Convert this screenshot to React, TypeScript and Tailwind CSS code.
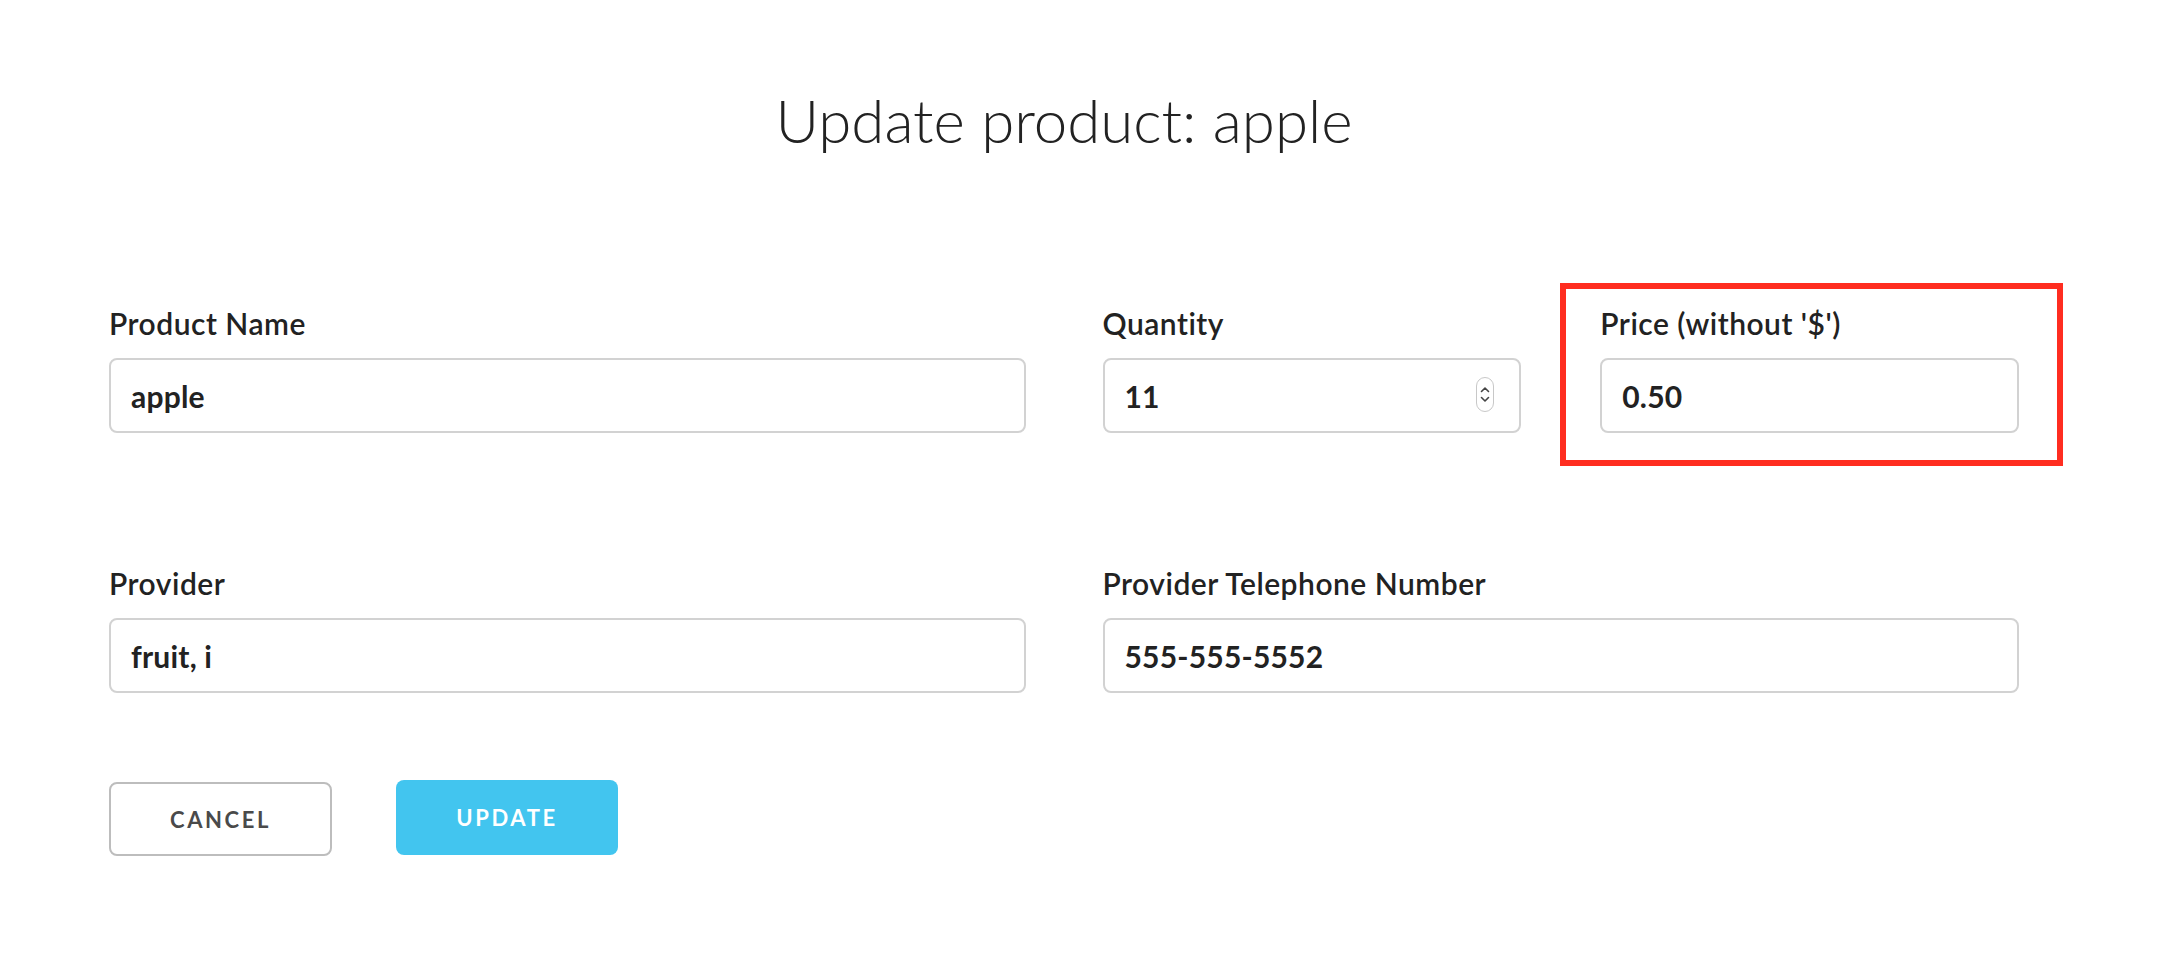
import React from "react";

const font = { fontFamily: "Lato, 'Open Sans', sans-serif" };

function Field({ label, value, className = "", children }: { label: string; value: string; className?: string; children?: React.ReactNode }) {
  return (
    <div className={`relative ${className}`}>
      <label className="block text-[30px] font-semibold leading-[1.2] tracking-[0.5px] text-[#222]">{label}</label>
      <div className="relative mt-[17px]">
        <input
          type="text"
          defaultValue={value}
          readOnly
          className="block h-[75px] w-full rounded-[8px] border-2 border-[#d2d2d2] bg-white px-[20px] text-[30px] font-bold tracking-[0.2px] text-[#222] outline-none"
        />
        {children}
      </div>
    </div>
  );
}

function Spinner() {
  return (
    <div className="absolute right-[27px] top-[19px] flex h-[35px] w-[18px] flex-col items-center justify-center gap-[3px] rounded-full border border-[#c8c8c8] bg-white">
      <svg width="10" height="7" viewBox="0 0 10 7" fill="none" stroke="#444" strokeWidth="1.6" strokeLinecap="round" strokeLinejoin="round">
        <path d="M1.5 5.5 5 2l3.5 3.5" />
      </svg>
      <svg width="10" height="7" viewBox="0 0 10 7" fill="none" stroke="#444" strokeWidth="1.6" strokeLinecap="round" strokeLinejoin="round">
        <path d="M1.5 1.5 5 5l3.5-3.5" />
      </svg>
    </div>
  );
}

export default function App() {
  return (
    <div className="min-h-[954px] w-full bg-white" style={font}>
      <div className="ml-[109px] w-[1910px] pt-[84px]">
        <h1 className="text-center text-[60px] font-light leading-[1.2] text-[#222]">Update product: apple</h1>

        <div className="mt-[149px] grid grid-cols-2 gap-x-[77px]">
          <Field label="Product Name" value="apple" />
          <div className="grid grid-cols-2 gap-x-[79px]">
            <Field label="Quantity" value="11">
              <Spinner />
            </Field>
            <Field label="Price (without '$')" value="0.50">
              {/* annotation frame drawn over the screenshot */}
              <div className="pointer-events-none absolute -left-[40px] -right-[44px] -bottom-[33px] top-[-75px] border-[6px] border-[#ff2d20]" />
            </Field>
          </div>
        </div>

        <div className="mt-[132px] grid grid-cols-2 gap-x-[77px]">
          <Field label="Provider" value="fruit, i" />
          <Field label="Provider Telephone Number" value="555-555-5552" />
        </div>

        <div className="mt-[87px] flex items-start gap-[64px]">
          <button className="mt-[2px] h-[74px] w-[223px] rounded-[8px] border-2 border-[#bdbdbd] bg-white text-[22px] font-bold uppercase tracking-[2.6px] text-[#4a4a4a]">
            Cancel
          </button>
          <button className="h-[75px] w-[222px] rounded-[8px] bg-[#42c5ef] text-[22px] font-bold uppercase tracking-[2.6px] text-white">
            Update
          </button>
        </div>
      </div>
    </div>
  );
}
